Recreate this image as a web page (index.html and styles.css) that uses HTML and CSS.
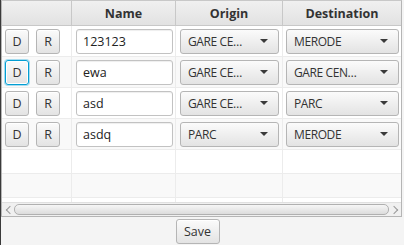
FILE: index.html
```html
<!DOCTYPE html>
<html>
  <head>
    <meta charset="UTF-8">
    <link rel="stylesheet" href="styles.css">
  </head>
  <body>
    <div class="table">
      <div class="header">
        <div class="col c1"></div>
        <div class="col c2">Name</div>
        <div class="col c3">Origin</div>
        <div class="col c4">Destination</div>
      </div>
      <div class="rows">
        <div class="row">
          <div class="cell c1"><button class="btn small">D</button><button class="btn small">R</button></div>
          <div class="cell c2"><input class="field" type="text" value="123123"></div>
          <div class="cell c3"><div class="combo"><span>GARE CE…</span><i class="arrow"></i></div></div>
          <div class="cell c4"><div class="combo"><span>MERODE</span><i class="arrow"></i></div></div>
        </div>
        <div class="row odd">
          <div class="cell c1"><button class="btn small focused">D</button><button class="btn small">R</button></div>
          <div class="cell c2"><input class="field" type="text" value="ewa"></div>
          <div class="cell c3"><div class="combo"><span>GARE CE…</span><i class="arrow"></i></div></div>
          <div class="cell c4"><div class="combo"><span>GARE CEN…</span><i class="arrow"></i></div></div>
        </div>
        <div class="row">
          <div class="cell c1"><button class="btn small">D</button><button class="btn small">R</button></div>
          <div class="cell c2"><input class="field" type="text" value="asd"></div>
          <div class="cell c3"><div class="combo"><span>GARE CE…</span><i class="arrow"></i></div></div>
          <div class="cell c4"><div class="combo"><span>PARC</span><i class="arrow"></i></div></div>
        </div>
        <div class="row odd">
          <div class="cell c1"><button class="btn small">D</button><button class="btn small">R</button></div>
          <div class="cell c2"><input class="field" type="text" value="asdq"></div>
          <div class="cell c3"><div class="combo"><span>PARC</span><i class="arrow"></i></div></div>
          <div class="cell c4"><div class="combo"><span>MERODE</span><i class="arrow"></i></div></div>
        </div>
        <div class="row empty">
          <div class="cell c1"></div><div class="cell c2"></div><div class="cell c3"></div><div class="cell c4"></div>
        </div>
        <div class="row empty odd">
          <div class="cell c1"></div><div class="cell c2"></div><div class="cell c3"></div><div class="cell c4"></div>
        </div>
        <div class="row empty">
          <div class="cell c1"></div><div class="cell c2"></div><div class="cell c3"></div><div class="cell c4"></div>
        </div>
      </div>
      <div class="hscroll">
        <span class="arr left"></span>
        <div class="thumb"></div>
        <span class="arr right"></span>
      </div>
    </div>
    <div class="footer">
      <button class="btn save">Save</button>
    </div>
  </body>
</html>
```

FILE: styles.css
```css
* {
  box-sizing: border-box;
}

body {
  margin: 0;
  height: 245px;
  overflow: hidden;
  background: #f4f4f4;
  border-left: 1px solid #3a3a3a;
  font-family: "Open Sans", sans-serif;
  font-size: 12px;
  color: #333;
}

.table {
  width: 401px;
  height: 217px;
  border: 1px solid #b5b5b5;
  border-top-color: #c8c8c8;
  background: #fff;
  display: flex;
  flex-direction: column;
  overflow: hidden;
}

.header {
  display: flex;
  height: 25px;
  border-bottom: 1px solid #c8c8c8;
  background: linear-gradient(#f0f0f0, #e2e2e2);
  flex: none;
}

.header .col {
  border-right: 1px solid #c8c8c8;
  display: flex;
  align-items: center;
  justify-content: center;
  font-weight: bold;
  font-size: 12.5px;
}

.c1 { width: 70px; flex: none; }
.c2 { width: 104px; flex: none; }
.c3 { width: 107px; flex: none; }
.c4 { flex: 1; border-right: none !important; }

.rows {
  flex: 1;
  overflow: hidden;
}

.row {
  display: flex;
  height: 31px;
  border-bottom: 1px solid #ececec;
  background: #fff;
}

.row.odd {
  background: #f9f9f9;
}

.row.empty {
  height: 24px;
}

.cell {
  border-right: 1px solid #ececec;
  display: flex;
  align-items: center;
}

.cell.c1 { padding-left: 3px; gap: 7px; }
.cell.c2 { padding: 0 3px 0 4px; }
.cell.c3 { padding: 0 3px 0 4px; }
.cell.c4 { padding: 0 2px 0 3px; }

.btn {
  font-family: "Open Sans", sans-serif;
  font-size: 12.5px;
  color: #333;
  border: 1px solid #b5b5b5;
  border-radius: 3px;
  background: linear-gradient(#fbfbfb, #e3e3e3);
  box-shadow: inset 0 1px 0 #fff;
  padding: 0;
  margin: 0;
  cursor: pointer;
}

.btn.small {
  width: 24px;
  height: 25px;
}

.btn.focused {
  border-color: #039ed3;
  box-shadow: 0 0 0 1px #a7dcef, inset 0 0 0 1px #fff;
}

.field {
  width: 97px;
  height: 25px;
  border: 1px solid #c2c2c2;
  border-radius: 3px;
  padding: 0 6px;
  font-family: "Open Sans", sans-serif;
  font-size: 12.5px;
  color: #222;
  background: #fff;
  box-shadow: inset 0 1px 1px #eee;
  outline: none;
}

.combo {
  flex: 1;
  height: 25px;
  border: 1px solid #b5b5b5;
  border-radius: 3px;
  background: linear-gradient(#fbfbfb, #e3e3e3);
  display: flex;
  align-items: center;
  justify-content: space-between;
  padding: 0 10px 0 7px;
  letter-spacing: -0.4px;
}

.arrow {
  width: 0;
  height: 0;
  border-left: 4px solid transparent;
  border-right: 4px solid transparent;
  border-top: 4px solid #3a3a3a;
}

.hscroll {
  flex: none;
  height: 14px;
  display: flex;
  align-items: center;
  background: #f0f0f0;
  border-top: 1px solid #e0e0e0;
}

.thumb {
  flex: 1;
  height: 11px;
  border: 1px solid #b0b0b0;
  border-radius: 5px;
  background: linear-gradient(#f6f6f6, #dcdcdc);
}

.arr {
  width: 12px;
  height: 14px;
  position: relative;
  flex: none;
}

.arr::before {
  content: "";
  position: absolute;
  top: 4px;
  width: 5px;
  height: 5px;
  border-left: 1px solid #999;
  border-bottom: 1px solid #999;
}

.arr.left::before {
  left: 5px;
  transform: rotate(45deg);
}

.arr.right::before {
  left: 2px;
  transform: rotate(-135deg);
}

.footer {
  display: flex;
  justify-content: center;
  padding-top: 2px;
  padding-right: 10px;
}

.btn.save {
  width: 44px;
  height: 25px;
}
```
